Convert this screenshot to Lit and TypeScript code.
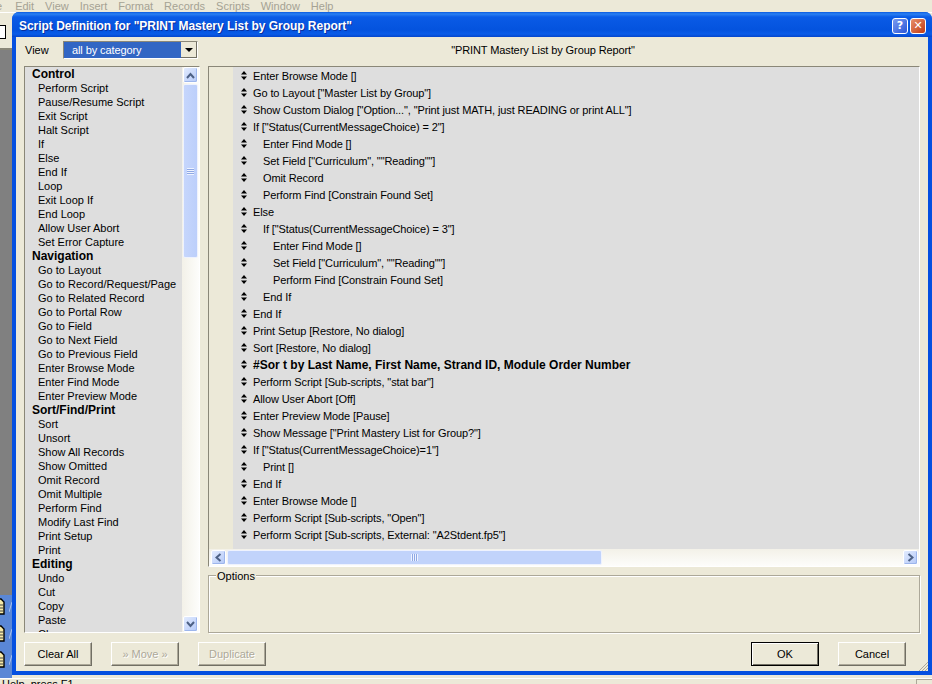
import { LitElement, html, css, svg } from "lit";
import { customElement } from "lit/decorators.js";

const LIST: [string, boolean][] = [
  ["Control", true], ["Perform Script", false], ["Pause/Resume Script", false], ["Exit Script", false], ["Halt Script", false], ["If", false], ["Else", false], ["End If", false], ["Loop", false], ["Exit Loop If", false], ["End Loop", false], ["Allow User Abort", false], ["Set Error Capture", false],
  ["Navigation", true], ["Go to Layout", false], ["Go to Record/Request/Page", false], ["Go to Related Record", false], ["Go to Portal Row", false], ["Go to Field", false], ["Go to Next Field", false], ["Go to Previous Field", false], ["Enter Browse Mode", false], ["Enter Find Mode", false], ["Enter Preview Mode", false],
  ["Sort/Find/Print", true], ["Sort", false], ["Unsort", false], ["Show All Records", false], ["Show Omitted", false], ["Omit Record", false], ["Omit Multiple", false], ["Perform Find", false], ["Modify Last Find", false], ["Print Setup", false], ["Print", false],
  ["Editing", true], ["Undo", false], ["Cut", false], ["Copy", false], ["Paste", false], ["Clear", false],
];

const STEPS: [string, number, boolean?][] = [
  ["Enter Browse Mode []", 0], ['Go to Layout ["Master List by Group"]', 0], ['Show Custom Dialog ["Option...", "Print just MATH, just READING or print ALL"]', 0],
  ['If ["Status(CurrentMessageChoice) = 2"]', 0], ["Enter Find Mode []", 1], ['Set Field ["Curriculum", ""Reading""]', 1], ["Omit Record", 1], ["Perform Find [Constrain Found Set]", 1],
  ["Else", 0], ['If ["Status(CurrentMessageChoice) = 3"]', 1], ["Enter Find Mode []", 2], ['Set Field ["Curriculum", ""Reading""]', 2], ["Perform Find [Constrain Found Set]", 2], ["End If", 1],
  ["End If", 0], ["Print Setup [Restore, No dialog]", 0], ["Sort [Restore, No dialog]", 0], ["#Sor t by Last Name, First Name, Strand ID, Module Order Number", 0, true],
  ['Perform Script [Sub-scripts, "stat bar"]', 0], ["Allow User Abort [Off]", 0], ["Enter Preview Mode [Pause]", 0], ['Show Message ["Print Mastery List for Group?"]', 0],
  ['If ["Status(CurrentMessageChoice)=1"]', 0], ["Print []", 1], ["End If", 0], ["Enter Browse Mode []", 0], ['Perform Script [Sub-scripts, "Open"]', 0], ['Perform Script [Sub-scripts, External: "A2Stdent.fp5"]', 0],
];

const MENU = ["e", "Edit", "View", "Insert", "Format", "Records", "Scripts", "Window", "Help"];

const chevron = (d: string) => svg`<svg width="9" height="7" viewBox="0 0 9 7"><path d=${d} fill="none" stroke="#4d6185" stroke-width="2"/></svg>`;
const chevronV = (d: string) => svg`<svg width="7" height="9" viewBox="0 0 7 9"><path d=${d} fill="none" stroke="#4d6185" stroke-width="2"/></svg>`;
const updown = svg`<svg width="6" height="9" viewBox="0 0 6 9"><path d="M3 0 6 3.500H0ZM3 9 0 5.500H6Z" fill="#000"/></svg>`;
const deskIcon = svg`<svg width="5" height="17" viewBox="0 0 5 17"><path d="M-4 1H1L4 4V16H-4Z" fill="#f6e9a6" stroke="#000" stroke-width="1.400"/><path d="M0 7H3M0 10H3M0 13H3" stroke="#444" stroke-width="1"/></svg>`;
const slash = svg`<svg width="3" height="10" viewBox="0 0 3 10"><path d="M0 10 3 0" stroke="#a9c2ee" stroke-width="1" fill="none"/></svg>`;
const grip = svg`<svg width="9" height="9" viewBox="0 0 9 9"><path d="M0 9 9 0M3 9 9 3M6 9 9 6" stroke="#aca899" stroke-width="1" fill="none"/></svg>`;

@customElement("app-root")
export class AppRoot extends LitElement {
  static styles = css`
    :host { display: block; width: 932px; height: 684px; position: relative; overflow: hidden; background: #ece9d8; font-family: "Liberation Sans", Arial, sans-serif; font-size: 11px; color: #000; }
    .backdrop { height: 684px; display: flex; flex-direction: column; }
    .menu { height: 12px; flex: none; display: flex; gap: 11px; align-items: flex-end; color: #a5a294; line-height: 12px; overflow: hidden; white-space: nowrap; }
    .menu span:first-child { margin-left: -4px; margin-right: 2px; }
    .toolbar { height: 38px; flex: none; padding-top: 12px; box-sizing: border-box; border-top: 1px solid #fff; }
    .doc { display: block; width: 5px; height: 12px; background: #fff; border: 1px solid #000; border-left: 0; }
    .toolbar i { display: block; height: 2px; width: 12px; margin-top: 9px; background: #8a8778; }
    .mid { flex: 1; display: flex; flex-direction: column; width: 12px; }
    .grey { height: 545px; flex: none; background: #808080; }
    .tray { flex: 1; background: #5a87d6; display: flex; flex-direction: column; padding-top: 3px; }
    .tray div { height: 26.500px; flex: none; box-sizing: border-box; display: flex; align-items: flex-start; justify-content: space-between; }
    .tray svg:last-child { margin-top: 4px; }
    .status { height: 9px; flex: none; border-top: 1px solid #fff; display: flex; overflow: hidden; white-space: nowrap; }
    .status span { flex: 1; padding-left: 2px; line-height: 11px; }
    .status i { flex: none; width: 15px; border: 1px solid #aca899; border-width: 1px 0 0 1px; }

    .win { position: absolute; left: 12px; top: 12px; width: 920px; height: 663px; box-sizing: border-box; background: #0550e0; border-radius: 7px 7px 0 0; display: flex; flex-direction: column; padding: 0 4px 4px 4px; }
    .title { height: 25px; flex: none; box-sizing: border-box; margin: 0 -4px; padding: 2px 6px 0 7px; display: flex; align-items: center; justify-content: space-between; border-radius: 7px 7px 0 0; background: linear-gradient(#0a5ae0 0, #2a80f2 2px, #0a5be6 5px, #0453de 18px, #0a5ce8 22px, #0446cc 25px); }
    .title b { color: #fff; font-family: "Liberation Sans", Arial, sans-serif; font-size: 12px; letter-spacing: -0.03px; text-shadow: 1px 1px 0 #0a2f9c; white-space: nowrap; }
    .caps { display: flex; gap: 2px; }
    .cap { width: 16px; height: 16px; box-sizing: border-box; border: 1px solid #fff; border-radius: 3px; color: #fff; font: bold 11px/14px "DejaVu Sans", sans-serif; text-align: center; }
    .help { background: linear-gradient(135deg, #7a9cf0, #2a56d8); }
    .close { background: linear-gradient(135deg, #e8906c, #c23a12); }

    .client { flex: 1; min-height: 0; position: relative; background: #ece9d8; display: grid; grid-template-columns: 184px 1fr; grid-template-rows: 28px 569px 37px; }
    .grip { position: absolute; right: 0; bottom: 0; line-height: 0; }
    .viewrow { display: flex; align-items: flex-start; gap: 9px; padding: 4px 0 0 9px; }
    .viewrow > span { width: 29px; line-height: 18px; }
    .combo { width: 133px; height: 16px; display: flex; border: 1px solid #fff; border-top-color: #8a8778; border-left-color: #8a8778; background: #3266c4; color: #fff; line-height: 16px; }
    .combo span { flex: 1; padding-left: 8px; letter-spacing: -0.1px; }
    .drop { width: 16px; background: #ece9d8; display: grid; place-items: center; border-right: 1px solid #716f64; border-bottom: 1px solid #716f64; box-sizing: border-box; }
    .tri { width: 0; height: 0; border: 4px solid transparent; border-top: 4px solid #000; border-bottom: 0; }
    .heading { text-align: center; line-height: 27px; padding-right: 42px; letter-spacing: -0.1px; }

    .listwrap { margin: 1px 0 0 8px; height: 567px; box-sizing: border-box; display: flex; border: 1px solid #fff; border-top-color: #8a8778; border-left-color: #8a8778; }
    .list { flex: 1; min-width: 0; overflow: hidden; background: #dedede; }
    .li { height: 14px; line-height: 14px; padding-left: 13px; white-space: nowrap; }
    .li.h { font-weight: bold; padding-left: 7px; font-size: 12px; }

    .vbar { width: 17px; flex: none; box-sizing: border-box; padding: 0 1px 0 1px; background: linear-gradient(90deg, #f3f1e8, #fdfdfb); display: flex; flex-direction: column; }
    .btn { flex: none; box-sizing: border-box; width: 15px; height: 16px; border: 1px solid #fff; border-radius: 2px; background: linear-gradient(135deg, #e2ebfe, #b4c9f8); display: grid; place-items: center; box-shadow: inset -1px -1px 0 #9db6ec; }
    .thumbv { flex: none; height: 174px; box-sizing: border-box; margin: 1px 0; border: 1px solid #eef2fe; border-radius: 2px; background: linear-gradient(90deg, #c6d6fc, #bccffb); display: grid; place-items: center; }
    .gripv { width: 7px; height: 7px; background: repeating-linear-gradient(#eef3ff 0 1px, #8fa8e4 1px 2px); }
    .spacer { flex: 1; }

    .right { margin: 1px 0 0 8px; padding-right: 8px; display: flex; flex-direction: column; min-width: 0; height: 567px; box-sizing: border-box; }
    .editor { height: 501px; flex: none; box-sizing: border-box; border: 1px solid #fff; border-top-color: #8a8778; border-left-color: #8a8778; display: flex; flex-direction: column; }
    .steps { flex: 1; min-height: 0; display: grid; grid-template-columns: 24px 1fr; background: #dedede; overflow: hidden; }
    .gutter { background: #ece9d8; }
    .st { height: 17px; display: flex; align-items: center; white-space: nowrap; letter-spacing: -0.11px; }
    .st svg { flex: none; margin: 0 6px 0 8px; }
    .st.b { font-weight: bold; font-size: 12px; letter-spacing: 0; }
    .hbar { height: 17px; flex: none; box-sizing: border-box; padding: 1px 1px 0 2px; display: flex; background: linear-gradient(#f3f1e8, #fdfdfb); }
    .hbar .btn { width: 15px; height: 15px; }
    .thumbh { flex: none; width: 375px; box-sizing: border-box; margin-left: 1px; height: 15px; border: 1px solid #eef2fe; border-radius: 2px; background: #c1d3fb; display: grid; place-items: center; }
    .griph { width: 7px; height: 7px; background: repeating-linear-gradient(90deg, #eef3ff 0 1px, #8fa8e4 1px 2px); }

    .options { position: relative; flex: none; margin-top: 8px; height: 58px; box-sizing: border-box; border: 1px solid #aca899; box-shadow: 1px 1px 0 #fff, inset 1px 1px 0 #fff; }
    .legend { position: absolute; left: 7px; top: -6px; padding: 0 1px; background: #ece9d8; line-height: 12px; }

    .footer { grid-column: 1 / 3; display: flex; align-items: flex-start; padding: 0 0 0 8px; }
    .pb { width: 68px; height: 24px; box-sizing: border-box; padding-bottom: 1px; border: 1px solid; border-color: #fff #716f64 #716f64 #fff; box-shadow: inset -1px -1px 0 #aca899; background: #ece9d8; display: grid; place-items: center; margin-top: 8px; }
    .pb.off { color: #aca899; text-shadow: 1px 1px 0 #fff; }
    .ml { margin-left: 19px; }
    .push { flex: 1; }
    .footer .ok { border: 1px solid #000; box-shadow: inset 1px 1px 0 #fff, inset -1px -1px 0 #716f64; margin-right: 19px; }
    .footer .cancel { margin-right: 22px; }
  `;

  render() {
    return html`
      <div class="backdrop">
        <div class="menu">${MENU.map((m) => html`<span>${m}</span>`)}</div>
        <div class="toolbar"><span class="doc"></span><i></i></div>
        <div class="mid">
          <div class="grey"></div>
          <div class="tray">${[0, 1, 2].map(() => html`<div>${deskIcon}${slash}</div>`)}</div>
        </div>
        <div class="status"><span>Help, press F1</span><i></i></div>
      </div>

      <section class="win">
        <header class="title">
          <b>Script Definition for "PRINT Mastery List by Group Report"</b>
          <div class="caps"><div class="cap help">?</div><div class="cap close">✕</div></div>
        </header>
        <div class="client">
          <div class="viewrow">
            <span>View</span>
            <div class="combo"><span>all by category</span><div class="drop"><i class="tri"></i></div></div>
          </div>
          <div class="heading">"PRINT Mastery List by Group Report"</div>

          <div class="listwrap">
            <div class="list">
              ${LIST.map(([t, h]) => html`<div class="li ${h ? "h" : ""}">${t}</div>`)}
            </div>
            <div class="vbar">
              <div class="btn">${chevron("M1 6 4.500 2 8 6")}</div>
              <div class="thumbv"><div class="gripv"></div></div>
              <div class="spacer"></div>
              <div class="btn">${chevron("M1 1 4.500 5 8 1")}</div>
            </div>
          </div>

          <div class="right">
            <div class="editor">
              <div class="steps">
                <div class="gutter"></div>
                <div>
                  ${STEPS.map(([t, ind, bold]) => html`<div class="st ${bold ? "b" : ""}">${updown}<span style="padding-left:${ind * 10}px">${t}</span></div>`)}
                </div>
              </div>
              <div class="hbar">
                <div class="btn">${chevronV("M5.500 1 1.500 4.500 5.500 8")}</div>
                <div class="thumbh"><div class="griph"></div></div>
                <div class="spacer"></div>
                <div class="btn">${chevronV("M1.500 1 5.500 4.500 1.500 8")}</div>
              </div>
            </div>
            <div class="options"><span class="legend">Options</span></div>
          </div>

          <div class="footer">
            <div class="pb">Clear All</div>
            <div class="pb off ml">» Move »</div>
            <div class="pb off ml">Duplicate</div>
            <div class="push"></div>
            <div class="pb ok">OK</div>
            <div class="pb cancel">Cancel</div>
          </div>
          <div class="grip">${grip}</div>
        </div>
      </section>
    `;
  }
}
